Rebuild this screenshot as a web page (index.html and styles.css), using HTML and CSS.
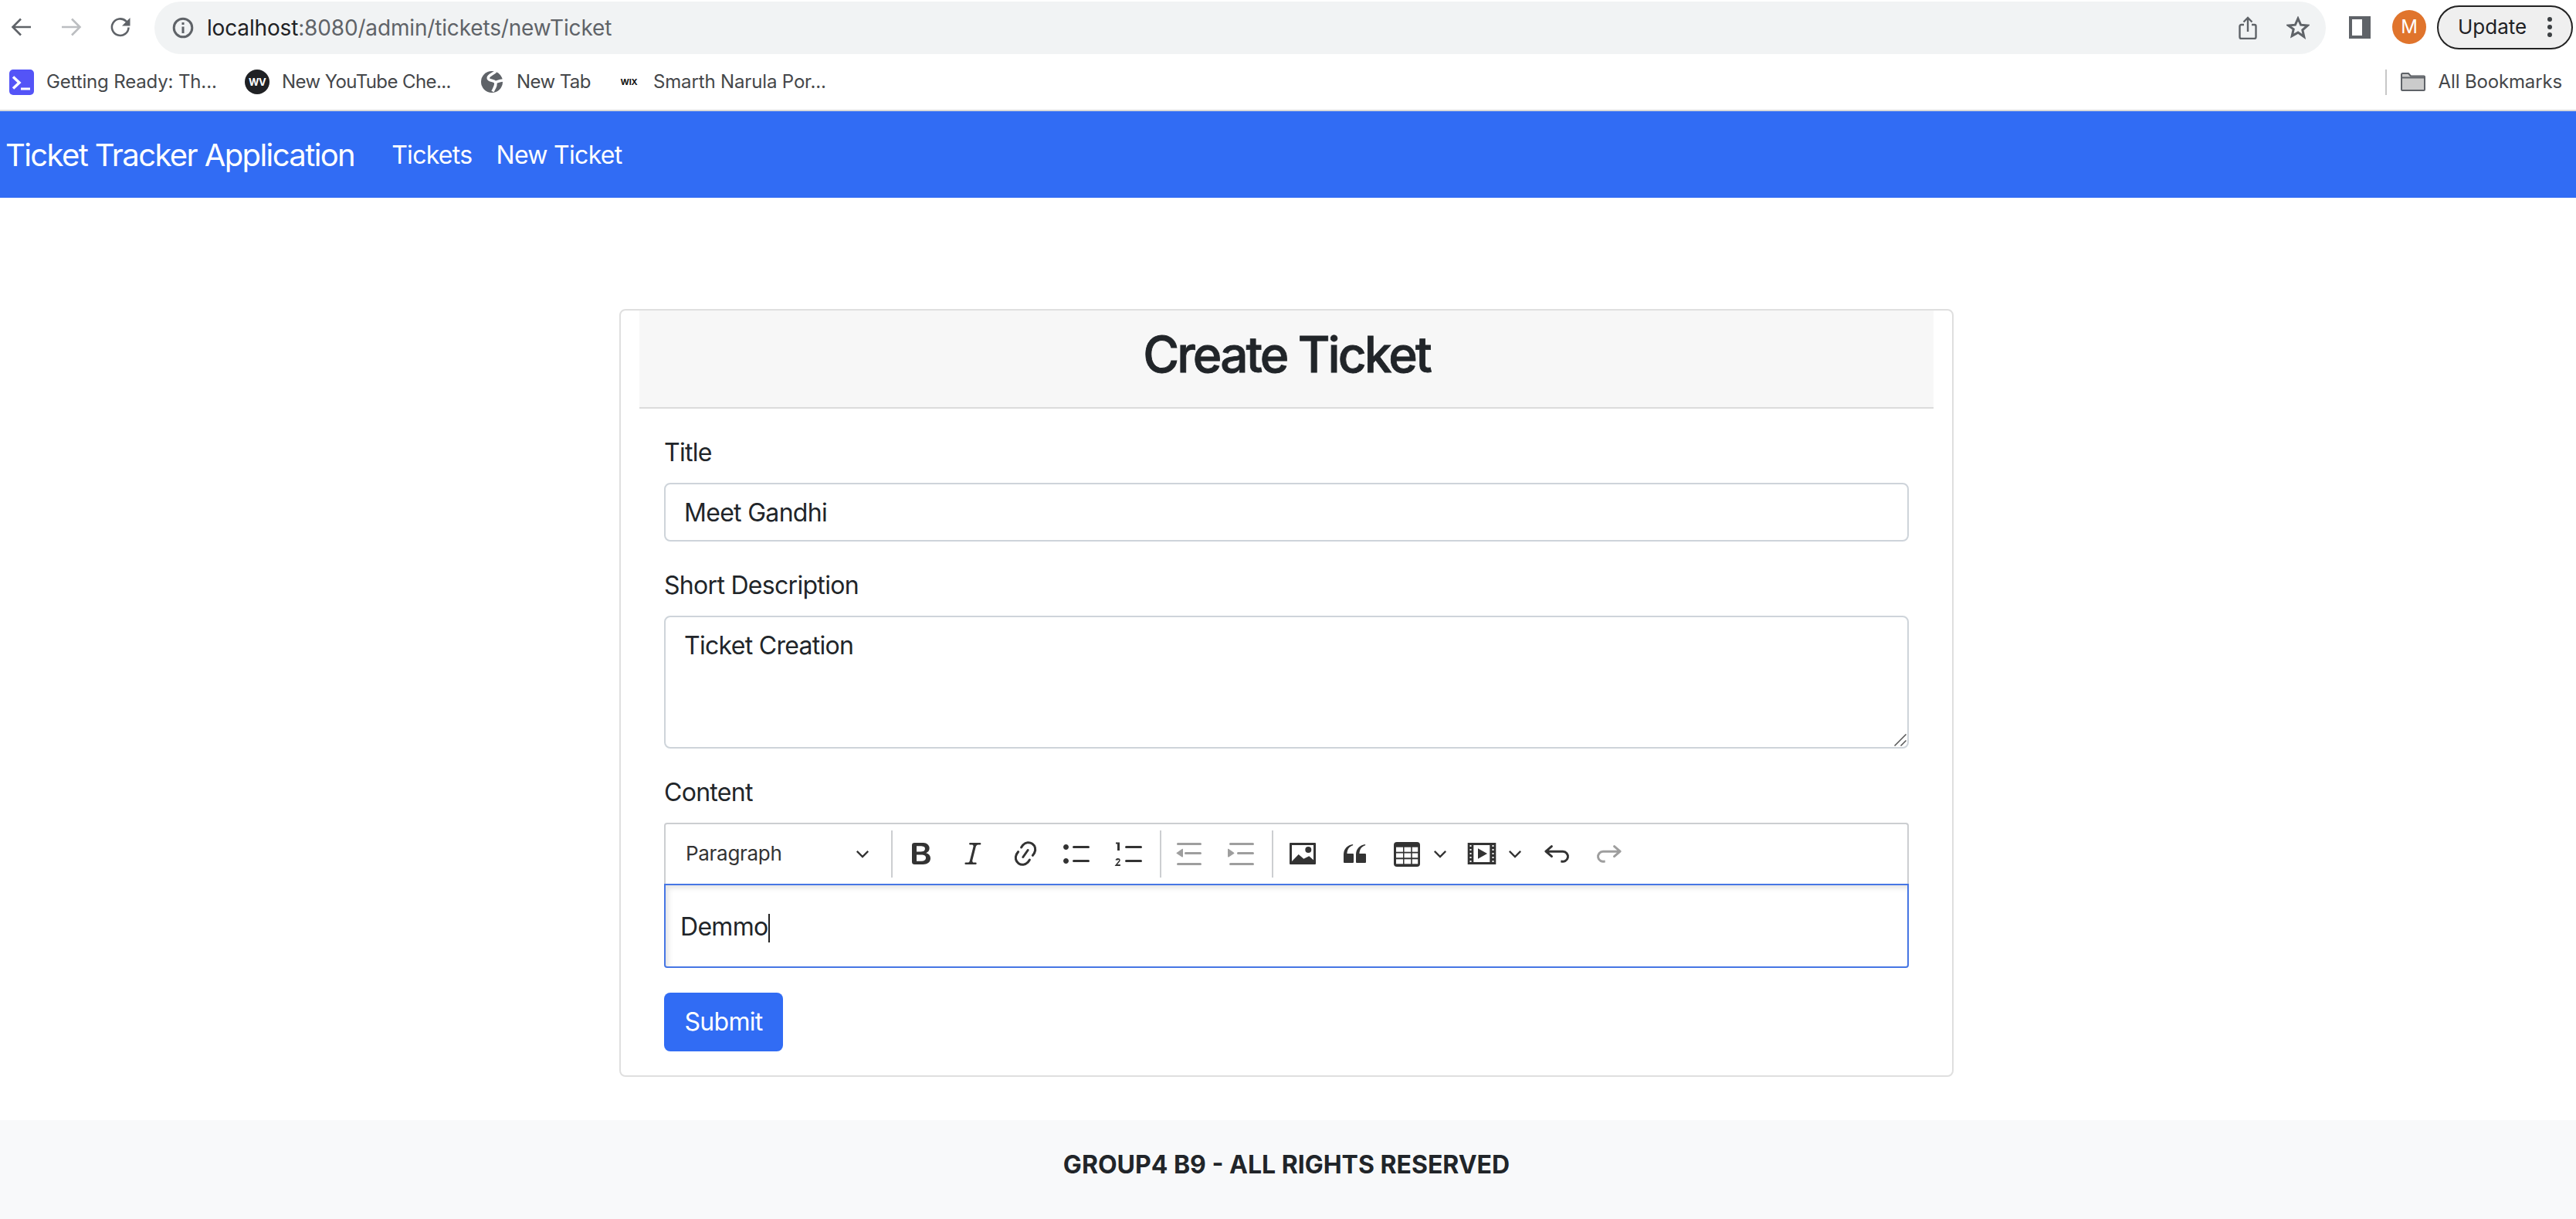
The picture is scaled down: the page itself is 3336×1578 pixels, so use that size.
FILE: index.html
```html
<!DOCTYPE html>
<html lang="en">
<head>
<meta charset="utf-8">
<title>Ticket Tracker Application</title>
<link rel="stylesheet" href="styles.css">
</head>
<body>
<header class="browser">
  <div class="topbar">
    <svg class="nav-ic back" viewBox="0 0 28 28"><path d="M26 14H3M13 3.5 2.5 14 13 24.5"/></svg>
    <svg class="nav-ic fwd" viewBox="0 0 28 28"><path d="M2 14h23M15 3.5 25.5 14 15 24.5"/></svg>
    <svg class="nav-ic reload" viewBox="0 0 28 28"><path d="M24.5 14.5a10.8 10.8 0 1 1-3.4-8.2L25 10"/><path class="solid" d="M26.5 2v10.5H16z"/></svg>
    <div class="omnibox">
      <svg class="info" viewBox="0 0 28 28"><circle cx="14" cy="14" r="11.8"/><path d="M14 12.5V21M14 7v3"/></svg>
      <div class="url"><span class="host">localhost</span>:8080/admin/tickets/newTicket</div>
      <svg class="share" viewBox="0 0 24 30"><path d="M7 11H3.5A2 2 0 0 0 1.500 13v14a2 2 0 0 0 2 2h17a2 2 0 0 0 2-2V13a2 2 0 0 0-2-2H17M12 20V2M6.500 7.500 12 2l5.500 5.500"/></svg>
      <svg class="star" viewBox="0 0 30 30"><path d="m15 3 3.600 8.200 8.900.8-6.700 5.900 2 8.700L15 21.100l-7.800 4.500 2-8.700L2.500 12l8.900-.8z"/></svg>
    </div>
    <svg class="sidepanel" viewBox="0 0 28 29"><path fill-rule="evenodd" d="M0 0h28v29H0zM4 4v21h13V4z"/></svg>
    <div class="avatar">M</div>
    <div class="update"><span>Update</span><svg class="dots" viewBox="0 0 6 26"><circle cx="3" cy="3" r="3"/><circle cx="3" cy="13" r="3"/><circle cx="3" cy="23" r="3"/></svg></div>
  </div>
  <div class="bookmarks">
    <div class="bm bm-a"><svg class="bm-ic" viewBox="0 0 32 33"><rect width="32" height="33" rx="5" fill="#5454f7"/><path d="m5 9.500 8 7.500-8 7.500" fill="none" stroke="#fff" stroke-width="3.500"/><path d="M15 25h12" fill="none" stroke="#fff" stroke-width="3"/></svg><span>Getting Ready: Th...</span></div>
    <div class="bm bm-b"><div class="wv">WV</div><span>New YouTube Che...</span></div>
    <div class="bm bm-c"><svg class="bm-ic globe" viewBox="0 0 30 30"><circle cx="15" cy="15" r="14" fill="#5f6368"/><path d="M20 1.500C16 5 9 7 10.500 11c1.500 3 7 1.500 9 4.500 1.500 3-.5 6-3.500 12M20 15.500c3-1 5-2.500 9.500-2.500" fill="none" stroke="#fff" stroke-width="3.600"/></svg><span>New Tab</span></div>
    <div class="bm bm-d"><div class="wix">WIX</div><span>Smarth Narula Por...</span></div>
    <div class="bm-end">
      <div class="bm-divider"></div>
      <svg class="folder" viewBox="0 0 32 24"><path d="M1 5V2.500A1.500 1.500 0 0 1 2.500 1H10l3 3.500h17A1 1 0 0 1 31 5.500V22a1 1 0 0 1-1 1H2a1 1 0 0 1-1-1z" fill="#cbcbcb" stroke="#5f6368" stroke-width="2"/><path d="M1.500 6.500h29" stroke="#5f6368" stroke-width="2"/></svg>
      <span>All Bookmarks</span>
    </div>
  </div>
</header>

<nav class="navbar">
  <a class="brand">Ticket Tracker Application</a>
  <a class="nav-link">Tickets</a>
  <a class="nav-link">New Ticket</a>
</nav>

<main class="page">
  <section class="card">
    <div class="card-header"><h1>Create Ticket</h1></div>
    <form class="card-body">
      <div class="group">
        <label class="lbl">Title</label>
        <input class="control" type="text" value="Meet Gandhi">
      </div>
      <div class="group">
        <label class="lbl">Short Description</label>
        <div class="area-wrap">
          <textarea class="control area">Ticket Creation</textarea>
          <svg class="grip" viewBox="0 0 16 16"><path d="M15.500.5.500 15.500M15.500 8.500 8.500 15.500"/></svg>
        </div>
      </div>
      <div class="group">
        <label class="lbl">Content</label>
        <div class="editor">
          <div class="toolbar">
            <div class="dropdown"><span>Paragraph</span><svg class="chev" viewBox="0 0 20 12"><path d="m2 2 8 8 8-8"/></svg></div>
            <div class="sep"></div>
            <div class="tb"><svg class="ck" viewBox="0 0 20 20"><path d="M10.187 17H5.773c-.637 0-1.092-.138-1.364-.415-.273-.277-.409-.718-.409-1.323V4.738c0-.617.14-1.062.419-1.332.279-.27.73-.406 1.354-.406h4.68c.69 0 1.288.041 1.793.124.506.083.96.242 1.36.478.341.197.644.447.906.75a3.262 3.262 0 0 1 .808 2.162c0 1.401-.722 2.426-2.167 3.075C15.050 10.175 16 11.315 16 13.010a3.756 3.756 0 0 1-2.296 3.504 6.100 6.100 0 0 1-1.517.377c-.571.073-1.238.11-2 .11zm-.217-6.217H7v4.087h3.069c1.977 0 2.965-.69 2.965-2.072 0-.707-.256-1.220-.768-1.537-.512-.319-1.277-.478-2.296-.478zM7 5.130v3.619h2.606c.729 0 1.292-.067 1.690-.2a1.600 1.600 0 0 0 .91-.765c.165-.267.247-.566.247-.897 0-.707-.26-1.176-.778-1.409-.519-.232-1.310-.348-2.375-.348H7z"/></svg></div>
            <div class="tb"><svg class="ck" viewBox="0 0 20 20"><path d="m9.586 14.633.021.004c-.036.335.095.655.393.962.082.083.173.15.274.201h1.474a.6.6 0 1 1 0 1.200H5.304a.6.6 0 0 1 0-1.200h1.150c.474-.07.809-.182 1.005-.334.157-.122.291-.32.404-.597l2.416-9.550a1.053 1.053 0 0 0-.281-.823 1.120 1.120 0 0 0-.442-.296H8.150a.6.6 0 0 1 0-1.200h6.443a.6.6 0 1 1 0 1.200h-1.195c-.376.056-.65.155-.823.296-.215.175-.423.439-.623.79l-2.366 9.347z"/></svg></div>
            <div class="tb"><svg class="ck" viewBox="0 0 20 20"><path d="m11.077 15 .991-1.416a.75.75 0 1 1 1.229.86l-1.148 1.640a.748.748 0 0 1-.217.206 5.251 5.251 0 0 1-8.503-5.955.741.741 0 0 1 .12-.274l1.147-1.639a.75.75 0 1 1 1.228.86L4.933 10.700l.006.003a3.750 3.750 0 0 0 6.132 4.294l.006.004zm5.494-5.335a.748.748 0 0 1-.12.274l-1.147 1.639a.75.75 0 1 1-1.228-.86l.86-1.230a3.750 3.750 0 0 0-6.144-4.301l-.86 1.229a.75.75 0 0 1-1.229-.86l1.148-1.640a.748.748 0 0 1 .217-.206 5.251 5.251 0 0 1 8.503 5.955zm-4.563-2.532a.75.75 0 0 1 .184 1.045l-3.155 4.505a.75.75 0 1 1-1.229-.86l3.155-4.506a.75.75 0 0 1 1.045-.184z"/></svg></div>
            <div class="tb"><svg class="ck" viewBox="0 0 20 20"><path d="M7 5.750c0 .414.336.75.75.75h9.500a.75.75 0 1 0 0-1.500h-9.500a.75.75 0 0 0-.75.75zm-6 0C1 4.784 1.777 4 2.750 4c.966 0 1.750.777 1.750 1.750 0 .966-.777 1.750-1.750 1.750C1.784 7.500 1 6.723 1 5.750zm6 9c0 .414.336.75.75.75h9.500a.75.75 0 1 0 0-1.500h-9.500a.75.75 0 0 0-.75.75zm-6 0c0-.966.777-1.750 1.750-1.750.966 0 1.750.777 1.750 1.750 0 .966-.777 1.750-1.750 1.750-.966 0-1.750-.777-1.750-1.750z"/></svg></div>
            <div class="tb"><svg class="ck" viewBox="0 0 20 20"><path d="M7 5.750c0 .414.336.75.75.75h9.500a.75.75 0 1 0 0-1.500h-9.500a.75.75 0 0 0-.75.75zM3.500 3v5H2V3.700H1v-1h2.500V3zM.343 17.857l2.590-3.257c.074-.106.115-.2.149-.317a.449.449 0 0 0-.04-.19c-.038-.1-.14-.149-.306-.149a.46.46 0 0 0-.303.083.36.36 0 0 0-.122.256H.8c.02-.363.166-.672.44-.926.274-.255.643-.383 1.107-.383.45 0 .81.112 1.077.336.267.224.4.535.4.934 0 .262-.067.504-.2.727l-.176.243-1.398 1.740h1.875v1H.343zM7 14.750c0 .414.336.75.75.75h9.500a.75.75 0 1 0 0-1.500h-9.500a.75.75 0 0 0-.75.75z"/></svg></div>
            <div class="sep sep-2"></div>
            <div class="tb off"><svg class="ck" viewBox="0 0 20 20"><path d="M2 3.750c0-.414.336-.75.75-.75h14.500a.75.75 0 1 1 0 1.500H2.750A.75.75 0 0 1 2 3.750zm5 6c0-.414.336-.75.75-.75h9.500a.75.75 0 1 1 0 1.500h-9.500A.75.75 0 0 1 7 9.750zM2.750 16h14.500a.75.75 0 1 1 0 1.500H2.750a.75.75 0 1 1 0-1.500zM5.368 6.950 1.980 9.358a.4.4 0 0 0 .013.661l3.390 2.207A.4.4 0 0 0 6 11.892V7.275a.4.4 0 0 0-.632-.326z"/></svg></div>
            <div class="tb off"><svg class="ck" viewBox="0 0 20 20"><path d="M2 3.750c0-.414.336-.75.75-.75h14.500a.75.75 0 1 1 0 1.500H2.750A.75.75 0 0 1 2 3.750zm5 6c0-.414.336-.75.75-.75h9.500a.75.75 0 1 1 0 1.500h-9.500A.75.75 0 0 1 7 9.750zM2.750 16h14.500a.75.75 0 1 1 0 1.500H2.750a.75.75 0 1 1 0-1.500zM1.632 6.950 5.020 9.358a.4.4 0 0 1-.013.661l-3.390 2.207A.4.4 0 0 1 1 11.892V7.275a.4.4 0 0 1 .632-.326z"/></svg></div>
            <div class="sep sep-3"></div>
            <div class="tb"><svg class="ck" viewBox="0 0 40 40"><path fill-rule="evenodd" d="M4 6h32a1 1 0 0 1 1 1v26a1 1 0 0 1-1 1H4a1 1 0 0 1-1-1V7a1 1 0 0 1 1-1zm2 3v21l8.700-9 6.600 5.700 7-3.400 5.700 5V9z"/><circle cx="27.300" cy="15" r="4"/></svg></div>
            <div class="tb"><svg class="ck" viewBox="0 0 20 20"><path d="M3 10.423a6.500 6.500 0 0 1 6.056-6.408l.038.67C6.448 5.423 5.354 7.663 5.220 10H9c.552 0 .5.432.5.986v4.511c0 .554-.448.503-1 .503h-5c-.552 0-.5-.449-.5-1.003v-4.574zm8 0a6.500 6.500 0 0 1 6.056-6.408l.038.67c-2.646.739-3.740 2.979-3.873 5.315H17c.552 0 .5.432.5.986v4.511c0 .554-.448.503-1 .503h-5c-.552 0-.5-.449-.5-1.003v-4.574z"/></svg></div>
            <div class="tb-split">
              <svg class="ck" viewBox="0 0 40 40"><rect x="3" y="5" width="34" height="32" rx="4"/><g class="cells"><rect x="6" y="11.700" width="9" height="6"/><rect x="16.500" y="11.700" width="8.700" height="6"/><rect x="26.800" y="11.700" width="7.400" height="6"/><rect x="6" y="19.500" width="9" height="5.800"/><rect x="16.500" y="19.500" width="8.700" height="5.800"/><rect x="26.800" y="19.500" width="7.400" height="5.800"/><rect x="6" y="27.300" width="9" height="6"/><rect x="16.500" y="27.300" width="8.700" height="6"/><rect x="26.800" y="27.300" width="7.400" height="6"/></g></svg>
              <svg class="chev" viewBox="0 0 20 12"><path d="m2 2 8 8 8-8"/></svg>
            </div>
            <div class="tb-split media">
              <svg class="ck" viewBox="0 0 40 40"><path fill-rule="evenodd" d="M2.700 6h36.600v28H2.700zM10.300 9v22h21V9z"/><g class="cells"><rect x="5.500" y="9" width="2" height="2"/><rect x="5.500" y="14" width="2" height="2"/><rect x="5.500" y="19" width="2" height="2"/><rect x="5.500" y="24" width="2" height="2"/><rect x="5.500" y="29" width="2" height="2"/><rect x="34.500" y="9" width="2" height="2"/><rect x="34.500" y="14" width="2" height="2"/><rect x="34.500" y="19" width="2" height="2"/><rect x="34.500" y="24" width="2" height="2"/><rect x="34.500" y="29" width="2" height="2"/></g><path d="M16 13.300 28 20l-12 6.700z"/></svg>
              <svg class="chev" viewBox="0 0 20 12"><path d="m2 2 8 8 8-8"/></svg>
            </div>
            <div class="tb"><svg class="ck" viewBox="0 0 20 20"><path d="m5.042 9.367 2.189 1.837a.75.75 0 0 1-.965 1.149l-3.788-3.180a.747.747 0 0 1-.21-.284.75.75 0 0 1 .17-.945L6.230 4.762a.75.75 0 1 1 .964 1.150L4.863 7.866h8.917A.75.75 0 0 1 14 7.900a4 4 0 1 1-1.477 7.718l.344-1.489a2.500 2.500 0 1 0 1.094-4.730l.008-.032H5.042z"/></svg></div>
            <div class="tb off"><svg class="ck" viewBox="0 0 20 20"><path d="m14.958 9.367-2.189 1.837a.75.75 0 0 0 .965 1.149l3.788-3.180a.747.747 0 0 0 .21-.284.75.75 0 0 0-.17-.945L13.770 4.762a.75.75 0 1 0-.964 1.150l2.331 1.955H6.220A.75.75 0 0 0 6 7.900a4 4 0 1 0 1.477 7.718l-.344-1.489A2.500 2.500 0 1 1 6.039 9.400l-.008-.032h8.927z"/></svg></div>
          </div>
          <div class="ed-body"><p>Demmo<span class="caret"></span></p></div>
        </div>
      </div>
      <button class="submit" type="button">Submit</button>
    </form>
  </section>
</main>

<footer class="footer"><strong>GROUP4 B9 - ALL RIGHTS RESERVED</strong></footer>
</body>
</html>
```
FILE: styles.css
```css
* { box-sizing: border-box; }
html, body { margin: 0; padding: 0; }
body {
  background: #fff;
  color: #212529;
  font-family: Inter, "Liberation Sans", sans-serif;
  font-size: 32px;
  line-height: 48px;
  letter-spacing: -0.7px;
  overflow: hidden;
}

/* browser chrome */
.browser { height: 144px; border-bottom: 2px solid #d9d9d9; letter-spacing: 0; }
.topbar { height: 70px; display: flex; align-items: center; padding-left: 14px; }
.nav-ic { width: 28px; height: 28px; fill: none; stroke: #5f6368; stroke-width: 2.6; flex: none; }
.nav-ic .solid { fill: #5f6368; stroke: none; }
.fwd { margin-left: 36px; stroke: #bcbec1; }
.reload { margin-left: 36px; }
.omnibox {
  width: 2812px; height: 68px; margin: 2px 0 0 30px; flex: none;
  display: flex; align-items: center;
  background: #f1f3f4; border-radius: 34px; padding-left: 23px;
}
.info { width: 28px; height: 28px; fill: none; stroke: #5f6368; stroke-width: 3; flex: none; }
.url { margin-left: 17px; font-size: 28px; line-height: 36px; letter-spacing: -0.16px; color: #5f6368; flex: 1; }
.host { color: #202124; }
.share { width: 24px; height: 30px; fill: none; stroke: #5f6368; stroke-width: 2.4; flex: none; }
.star { width: 30px; height: 30px; margin: 0 21px 0 38px; fill: none; stroke: #5f6368; stroke-width: 3; flex: none; }
.sidepanel { width: 28px; height: 29px; margin-left: 30px; fill: #5f6368; flex: none; }
.avatar {
  width: 44px; height: 44px; margin-left: 28px; border-radius: 50%; flex: none;
  background: #e0742c; color: #fff; font-size: 24px; line-height: 44px; text-align: center;
}
.update {
  width: 176px; height: 57px; margin-left: 14px; flex: none;
  display: flex; align-items: center; padding-left: 25px;
  border: 2px solid #222; border-radius: 29px; background: #efefef;
  font-size: 26px; line-height: 36px; color: #202124;
}
.dots { width: 6px; height: 26px; margin-left: auto; margin-right: 25px; fill: #3c4043; flex: none; }

.bookmarks { height: 72px; display: flex; align-items: center; font-size: 24px; line-height: 32px; letter-spacing: -0.15px; color: #45474a; }
.bm { display: flex; align-items: center; flex: none; }
.bm-ic { width: 32px; height: 33px; flex: none; }
.globe { width: 30px; height: 30px; }
.bm-a { margin-left: 12px; width: 305px; gap: 16px; }
.bm-b { width: 305px; gap: 16px; letter-spacing: -0.6px; }
.bm-c { width: 180px; gap: 17px; letter-spacing: -0.6px; }
.bm-d { gap: 19px; }
.wv {
  width: 32px; height: 32px; border-radius: 50%; background: #202124; color: #fff;
  font-size: 13px; line-height: 32px; text-align: center; font-weight: 700; flex: none;
}
.wix { width: 25px; font-size: 11px; line-height: 20px; font-weight: 700; color: #111; text-align: center; flex: none; }
.bm-end { margin-left: auto; display: flex; align-items: center; padding-right: 18px; }
.bm-divider { width: 2px; height: 33px; background: #c7c7c7; margin-right: 18px; }
.folder { width: 32px; height: 24px; margin-right: 17px; flex: none; }

/* navbar */
.navbar { height: 112px; padding: 1px 0 0 7px; background: #316cf4; display: flex; align-items: center; color: #fff; }
.brand { font-size: 40px; line-height: 60px; margin-right: 48px; letter-spacing: -1.6px; }
.nav-link { font-size: 32px; margin-right: 31px; }

/* card */
.page { padding: 144px 4px 56px 0; }
.card {
  width: 1728px; margin: 0 auto; padding: 0 24px;
  border: 2px solid #dfdfdf; border-radius: 8px; background: #fff;
}
.card-header { height: 127px; padding-bottom: 12px; background: #f7f7f7; border-bottom: 2px solid #dcdcdc; display: flex; align-items: center; justify-content: center; }
.card-header h1 { margin: 0; font-size: 64px; line-height: 77px; font-weight: 500; letter-spacing: -2.9px; -webkit-text-stroke: 0.8px #212529; }
.card-body { display: flex; flex-direction: column; gap: 32px; padding: 32px 32px 31px; }
.group { display: flex; flex-direction: column; gap: 16px; }
.lbl { display: block; position: relative; top: 1px; }
.control {
  display: block; width: 100%; height: 76px; padding: 12px 24px;
  border: 2px solid #ced4da; border-radius: 8px; background: #fff;
  font: inherit; letter-spacing: inherit; color: #212529; outline: 0;
}
.area-wrap { position: relative; }
.area { height: 172px; padding-top: 13px; resize: none; }
.grip { position: absolute; right: 3px; bottom: 3px; width: 16px; height: 16px; fill: none; stroke: #555; stroke-width: 1.5; }

/* editor */
.editor { display: flex; flex-direction: column; }
.toolbar {
  height: 79px; padding-bottom: 1px; display: flex; align-items: center;
  border: 2px solid #ccced1; border-bottom: 0; border-radius: 4px 4px 0 0;
  color: #333;
}
.dropdown {
  width: 292px; flex: none; display: flex; align-items: center; justify-content: space-between;
  padding: 0 28px 0 26px; font-size: 26px; line-height: 36px; letter-spacing: -0.3px;
}
.chev { width: 18px; height: 11px; fill: none; stroke: #333; stroke-width: 2.600; flex: none; }
.sep { width: 2px; height: 61px; background: #ccced1; flex: none; }
.dropdown + .sep { margin-right: 3px; }
.sep-2 { margin: 0 3px 0 5px; }
.sep-3 { margin: 0 4px 0 5.5px; }
.tb { width: 67.5px; flex: none; display: flex; justify-content: center; }
.tb-split { width: 94px; flex: none; display: flex; align-items: center; padding-left: 14px; gap: 14px; }
.media { width: 100.5px; gap: 15px; padding-left: 16px; }
.ck { width: 40px; height: 40px; fill: #333; flex: none; }
.cells { fill: #fff; }
.off .ck { fill: #9e9e9e; }
.ed-body {
  height: 109px; padding: 30px 19px 0; border: 2px solid #4676e4; border-radius: 0 0 4px 4px;
  box-shadow: inset 4px 4px 6px rgba(0,0,0,.1);
}
.ed-body p { margin: 0; }
.caret { display: inline-block; width: 2px; height: 37px; background: #222; vertical-align: -9px; }

.submit {
  width: 154px; height: 76px; padding: 0; border: 0; border-radius: 8px;
  background: #316cf4; color: #fff; font: inherit; letter-spacing: inherit;
}

/* footer */
.footer { height: 128px; padding: 0 4px 12px 0; background: #f8f9fa; display: flex; align-items: center; justify-content: center; letter-spacing: 0; }
.footer strong { font-weight: 700; }
```
